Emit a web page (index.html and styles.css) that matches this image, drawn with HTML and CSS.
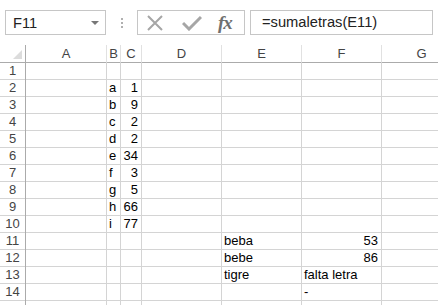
FILE: index.html
```html
<!DOCTYPE html>
<html lang="es">
<head>
  <meta charset="UTF-8" />
  <title>sumaletras</title>
  <link rel="stylesheet" href="styles.css">
</head>
<body>
  <div class="bar">
    <div class="namebox">
      <span>F11</span>
      <span class="arrow"></span>
    </div>
    <div class="dots"><i></i><i></i><i></i></div>
    <div class="fxgroup">
      <svg class="ico-x" width="16" height="16" viewBox="0 0 16 16"><path d="M1 1 L15 15 M15 1 L1 15" stroke="#a6a6a6" stroke-width="2" fill="none"/></svg>
      <svg class="ico-ok" width="20" height="16" viewBox="0 0 20 16"><path d="M1 8 L7 14 L19 2" stroke="#a6a6a6" stroke-width="3" fill="none"/></svg>
      <span class="fx">fx</span>
    </div>
    <div class="formula">=sumaletras(E11)</div>
  </div>

  <div class="sheet">
    <div class="row head">
      <div class="corner"><span class="tri"></span></div>
      <div>A</div><div>B</div><div>C</div><div>D</div><div>E</div><div>F</div><div>G</div>
    </div>
    <div class="row"><div class="num">1</div><div></div><div></div><div></div><div></div><div></div><div></div><div></div></div>
    <div class="row"><div class="num">2</div><div></div><div>a</div><div class="r">1</div><div></div><div></div><div></div><div></div></div>
    <div class="row"><div class="num">3</div><div></div><div>b</div><div class="r">9</div><div></div><div></div><div></div><div></div></div>
    <div class="row"><div class="num">4</div><div></div><div>c</div><div class="r">2</div><div></div><div></div><div></div><div></div></div>
    <div class="row"><div class="num">5</div><div></div><div>d</div><div class="r">2</div><div></div><div></div><div></div><div></div></div>
    <div class="row"><div class="num">6</div><div></div><div>e</div><div class="r">34</div><div></div><div></div><div></div><div></div></div>
    <div class="row"><div class="num">7</div><div></div><div>f</div><div class="r">3</div><div></div><div></div><div></div><div></div></div>
    <div class="row"><div class="num">8</div><div></div><div>g</div><div class="r">5</div><div></div><div></div><div></div><div></div></div>
    <div class="row"><div class="num">9</div><div></div><div>h</div><div class="r">66</div><div></div><div></div><div></div><div></div></div>
    <div class="row"><div class="num">10</div><div></div><div>i</div><div class="r">77</div><div></div><div></div><div></div><div></div></div>
    <div class="row"><div class="num">11</div><div></div><div></div><div></div><div></div><div>beba</div><div class="r">53</div><div></div></div>
    <div class="row"><div class="num">12</div><div></div><div></div><div></div><div></div><div>bebe</div><div class="r">86</div><div></div></div>
    <div class="row"><div class="num">13</div><div></div><div></div><div></div><div></div><div>tigre</div><div>falta letra</div><div></div></div>
    <div class="row"><div class="num">14</div><div></div><div></div><div></div><div></div><div></div><div>-</div><div></div></div>
    <div class="row"><div class="num"></div><div></div><div></div><div></div><div></div><div></div><div></div><div></div></div>
  </div>
</body>
</html>
```
FILE: styles.css
```css
body { margin: 0; background: #fff; font-family: Arial, "Liberation Sans", sans-serif; color: #000; width: 438px; height: 305px; overflow: hidden; }

.bar { height: 45px; display: flex; align-items: flex-start; padding: 10px 0 0 5px; box-sizing: border-box; }
.namebox { width: 101px; height: 25px; box-sizing: border-box; border: 1px solid #c6c6c6; display: flex; align-items: center; justify-content: space-between; padding: 0 6px 0 7px; font-size: 14.7px; color: #222; }
.arrow { width: 0; height: 0; border-left: 4px solid transparent; border-right: 4px solid transparent; border-top: 4px solid #777; }
.dots { width: 31px; height: 25px; display: flex; flex-direction: column; align-items: center; justify-content: center; gap: 2px; }
.dots i { width: 2px; height: 2px; background: #b0b0b0; }
.fxgroup { width: 108px; height: 25px; box-sizing: border-box; border: 1px solid #c6c6c6; display: flex; align-items: center; padding-left: 9px; }
.ico-x { margin-right: 19px; }
.ico-ok { margin-right: 16px; }
.fx { font-family: "Liberation Serif", "DejaVu Serif", serif; font-style: italic; font-weight: bold; font-size: 19px; color: #707070; letter-spacing: -1px; }
.formula { flex: 1; margin-left: 5px; margin-right: 5px; height: 25px; box-sizing: border-box; border: 1px solid #c6c6c6; padding-left: 11px; font-size: 14.7px; line-height: 23px; color: #222; }

.sheet { width: 470px; }
.row { display: grid; grid-template-columns: 26px 81px 14px 21px 80px 80px 80px 80px; height: 17px; }
.row > div { box-sizing: border-box; border-right: 1px solid #d4d4d4; border-bottom: 1px solid #d4d4d4; font-size: 13px; line-height: 17px; padding: 0 2px; white-space: nowrap; overflow: visible; }
.row > div.r { text-align: right; padding-right: 3px; }
.row > div.num { border-right-color: #ababab; text-align: center; color: #444; padding: 0; }
.head > div { border-bottom-color: #ababab; border-right-color: #e1e1e1; text-align: center; color: #444; padding: 0; }
.head > div.corner { border-right-color: #ababab; position: relative; }
.tri { position: absolute; right: 3px; bottom: 3px; width: 0; height: 0; border-left: 9px solid transparent; border-bottom: 9px solid #dcdcdc; }
```
